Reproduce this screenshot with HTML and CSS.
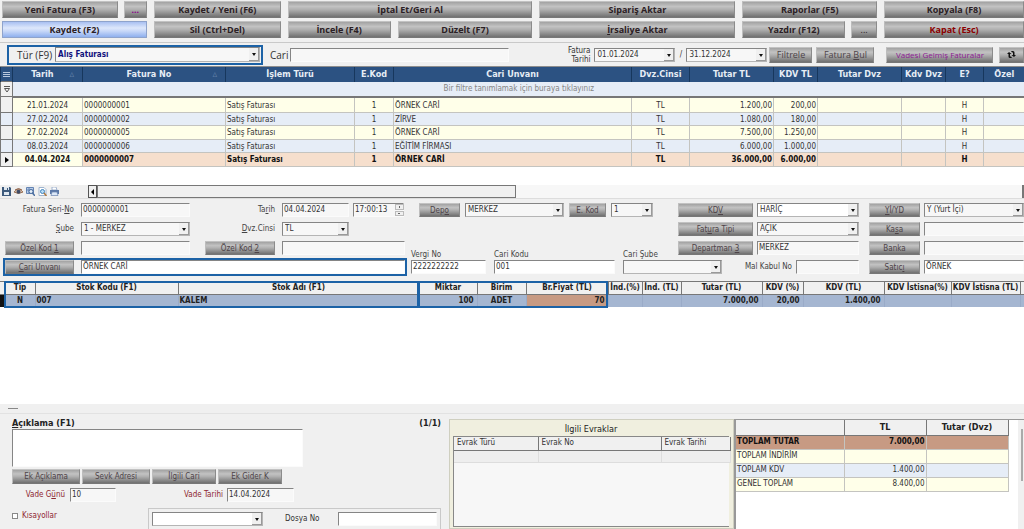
FILE: index.html
```html
<!DOCTYPE html>
<html lang="tr">
<head>
<meta charset="utf-8">
<title>Fatura</title>
<link rel="stylesheet" href="styles.css">
</head>
<body>
<header class="toolbar">
  <div class="tool-group">
    <div class="tool-row"><button class="btn tool">Yeni Fatura (F3)</button><button class="btn tool more purple">...</button></div>
    <div class="tool-row"><button class="btn tool primary">Kaydet (F2)</button></div>
  </div>
  <div class="tool-group">
    <div class="tool-row"><button class="btn tool">Kaydet / Yeni (F6)</button></div>
    <div class="tool-row"><button class="btn tool">Sil (Ctrl+Del)</button></div>
  </div>
  <div class="tool-group">
    <div class="tool-row"><button class="btn tool">İptal Et/Geri Al</button></div>
    <div class="tool-row wide-gap"><button class="btn tool narrow">İncele (F4)</button><button class="btn tool">Düzelt (F7)</button></div>
  </div>
  <div class="tool-group">
    <div class="tool-row"><button class="btn tool">Sipariş Aktar</button></div>
    <div class="tool-row"><button class="btn tool"><u>İ</u>rsaliye Aktar</button></div>
  </div>
  <div class="tool-group">
    <div class="tool-row"><button class="btn tool">Raporlar (F5)</button></div>
    <div class="tool-row"><button class="btn tool">Yazdır (F12)</button><button class="btn tool more thin">...</button></div>
  </div>
  <div class="tool-group">
    <div class="tool-row"><button class="btn tool">Kopyala (F8)</button></div>
    <div class="tool-row"><button class="btn tool danger">Kapat (Esc)</button></div>
  </div>
</header>

<section class="filters">
  <div class="type-box">
    <label class="big" for="tur">Tür (F9)</label>
    <span class="combo"><select id="tur" class="type-select"><option>Alış Faturası</option></select></span>
  </div>
  <label class="big cari-label" for="cari">Cari</label>
  <input id="cari" class="field cari-input" type="text">
  <label class="date-label" for="d1">Fatura<br>Tarihi</label>
  <span class="combo date"><select id="d1"><option>01.01.2024</option></select></span>
  <span class="slash">/</span>
  <span class="combo date"><select aria-label="Bitiş tarihi"><option>31.12.2024</option></select></span>
  <button class="btn mid">Filtrele</button>
  <button class="btn mid find">Fatura <u>B</u>ul</button>
  <button class="btn mid overdue">Vadesi Gelmiş Faturalar</button>
  <button class="btn mid refresh" aria-label="Yenile"><svg width="9" height="9" viewBox="0 0 18 18"><path d="M4 4L0 8h3v5q0 3 3 3h4l-2-3H6V8h3zM14 14l4-4h-3V5q0-3-3-3H8l2 3h2v5H9z" fill="#111"/></svg></button>
</section>

<section class="list">
  <table class="invoices">
    <colgroup><col class="w12"><col class="w70"><col class="w143"><col class="w129"><col class="w39"><col class="w238"><col class="w58"><col class="w84"><col class="w44"><col class="w84"><col class="w44"><col class="w38"><col class="w41"></colgroup>
    <thead>
      <tr><th><svg width="7" height="7" viewBox="0 0 7 7" stroke="#b9c9de"><path d="M0 1.500h7M0 3.500h7M0 5.500h7"/></svg></th><th><span class="sort">△</span>Tarih</th><th><span class="sort">△</span>Fatura No</th><th>İşlem Türü</th><th>E.Kod</th><th>Cari Unvanı</th><th>Dvz.Cinsi</th><th>Tutar TL</th><th>KDV TL</th><th>Tutar Dvz</th><th>Kdv Dvz</th><th>E?</th><th>Özel</th></tr>
      <tr class="filter-row"><td class="mark"><svg width="6" height="7" viewBox="0 0 6 7" fill="none" stroke="#555" stroke-width="1"><path d="M0 .5h6M.5 2.500h5L3 6z"/></svg></td><td colspan="12">Bir filtre tanımlamak için buraya tıklayınız</td></tr>
    </thead>
    <tbody>
      <tr><td class="mark"></td><td>21.01.2024</td><td class="l">0000000001</td><td class="l">Satış Faturası</td><td>1</td><td class="l">ÖRNEK CARİ</td><td>TL</td><td class="r">1.200,00</td><td class="r">200,00</td><td></td><td></td><td>H</td><td></td></tr>
      <tr><td class="mark"></td><td>27.02.2024</td><td class="l">0000000002</td><td class="l">Satış Faturası</td><td>1</td><td class="l">ZİRVE</td><td>TL</td><td class="r">1.080,00</td><td class="r">180,00</td><td></td><td></td><td>H</td><td></td></tr>
      <tr><td class="mark"></td><td>27.02.2024</td><td class="l">0000000005</td><td class="l">Satış Faturası</td><td>1</td><td class="l">ÖRNEK CARİ</td><td>TL</td><td class="r">7.500,00</td><td class="r">1.250,00</td><td></td><td></td><td>H</td><td></td></tr>
      <tr><td class="mark"></td><td>08.03.2024</td><td class="l">0000000006</td><td class="l">Satış Faturası</td><td>1</td><td class="l">EĞİTİM FİRMASI</td><td>TL</td><td class="r">6.000,00</td><td class="r">1.000,00</td><td></td><td></td><td>H</td><td></td></tr>
      <tr class="current"><td class="mark"><svg width="4" height="6" viewBox="0 0 4 6"><path d="M0 0l4 3-4 3z"/></svg></td><td>04.04.2024</td><td class="l">0000000007</td><td class="l">Satış Faturası</td><td>1</td><td class="l">ÖRNEK CARİ</td><td>TL</td><td class="r">36.000,00</td><td class="r">6.000,00</td><td></td><td></td><td>H</td><td></td></tr>
    </tbody>
  </table>
  <div class="list-foot">
    <div class="foot-icons">
      <svg width="9" height="9" viewBox="0 0 9 9"><path d="M0 0h8l1 1v8H0z" fill="#3d5a7c"/><path d="M2 0h5v3H2zM2 5h5v3H2z" fill="#dfe7ef"/><path d="M5 1h1v2H5z" fill="#3d5a7c"/></svg>
      <svg width="9" height="9" viewBox="0 0 9 9"><path d="M0 5Q4.500 0 9 5 4.500 8 0 5z" fill="#e7cdb8" stroke="#9a7258"/><circle cx="4.500" cy="4.700" r="2" fill="#3f4c66"/><path d="M1 3Q4.500 0 8 3" fill="none" stroke="#8a5a3d"/></svg>
      <svg width="9" height="9" viewBox="0 0 9 9"><path d="M.5.5h7v6h-7z" fill="#b8cdea" stroke="#6484b3"/><path d="M1 3h6M3 1v5" stroke="#6484b3"/><circle cx="5" cy="4.500" r="2" fill="#e6f0fb" stroke="#4c6f9f"/><path d="M6.500 6L9 9" stroke="#4c6f9f" stroke-width="1.500"/></svg>
      <svg width="9" height="9" viewBox="0 0 9 9"><path d="M1 .5h5l2 2v6H1z" fill="#fff" stroke="#9fb4ce"/><circle cx="4.500" cy="4.500" r="2" fill="#b7dcf5" stroke="#3f83bd"/><path d="M6 6l2.500 3" stroke="#b07738" stroke-width="1.400"/></svg>
      <svg width="9" height="9" viewBox="0 0 9 9"><path d="M2 0h4l1 3H2z" fill="#fff" stroke="#8098bd" stroke-width=".7"/><path d="M0 3h9v4H0z" fill="#5c79a8"/><path d="M2 5h5l1 3.500H1z" fill="#dce8f8" stroke="#6a84af" stroke-width=".7"/></svg>
    </div>
    <div class="scroll-left"><svg width="3" height="6" viewBox="0 0 3 6"><path d="M3 0L0 3l3 3z"/></svg></div>
    <div class="scroll-thumb"></div>
    <div class="scroll-track"></div>
  </div>
</section>

<section class="form">
  <div class="form-left">
    <label for="seri">Fatura Seri-<u>N</u>o</label>
    <input id="seri" class="field" type="text" value="0000000001">
    <label for="tarih">Ta<u>r</u>ih</label>
    <div class="pair"><input id="tarih" class="field w67" type="text" value="04.04.2024"><span class="spin"><input class="field" type="text" value="17:00:13" aria-label="Saat"><span class="spin-btns"><i></i><i></i></span></span></div>

    <label for="sube"><u>Ş</u>ube</label>
    <span class="combo"><select id="sube"><option>1 - MERKEZ</option></select></span>
    <label for="dvz"><u>D</u>vz.Cinsi</label>
    <span class="combo w67"><select id="dvz"><option>TL</option></select></span>

    <button class="btn small">Özel Kod <u>1</u></button>
    <input class="field" type="text" aria-label="Özel Kod 1">
    <button class="btn small kod2">Özel Kod <u>2</u></button>
    <input class="field" type="text" aria-label="Özel Kod 2">

    <div class="cari-row"><button class="btn small"><u>C</u>ari Unvanı</button><input class="field white" type="text" value="ÖRNEK CARİ" aria-label="Cari Unvanı"></div>
  </div>
  <div class="form-right">
    <div class="depo">
      <button class="btn small w41">Dep<u>o</u></button>
      <span class="combo w99"><select aria-label="Depo"><option>MERKEZ</option></select></span>
      <button class="btn small w37">E. Kod</button>
      <span class="combo w42"><select aria-label="E. Kod"><option>1</option></select></span>
    </div>
    <button class="btn small right-btn">KD<u>V</u></button>
    <span class="combo value-col white"><select aria-label="KDV"><option>HARİÇ</option></select></span>
    <button class="btn small last-btn"><u>Y</u>İ/YD</button>
    <span class="combo last"><select aria-label="Yİ/YD"><option>Y (Yurt İçi)</option></select></span>

    <button class="btn small right-btn">Fat<u>u</u>ra Tipi</button>
    <span class="combo value-col"><select aria-label="Fatura Tipi"><option>AÇIK</option></select></span>
    <button class="btn small last-btn">Ka<u>s</u>a</button>
    <input class="field last" type="text" aria-label="Kasa">

    <div class="account">
      <div class="stack w75"><label for="vergi">Vergi No</label><input id="vergi" class="field white" type="text" value="2222222222"></div>
      <div class="stack w121"><label for="kodu">Cari Kodu</label><input id="kodu" class="field white" type="text" value="001"></div>
      <div class="stack rest"><label for="csube">Cari Şube</label><span class="combo"><select id="csube"><option></option></select></span></div>
    </div>
    <button class="btn small right-btn dep">Departman <u>3</u></button>
    <input class="field value-col" type="text" value="MERKEZ" aria-label="Departman 3">
    <button class="btn small last-btn">Banka</button>
    <input class="field last" type="text" aria-label="Banka">

    <div class="mal"><label for="mal">Mal Kabul No</label><input id="mal" class="field" type="text"></div>
    <button class="btn small last-btn">Satıc<u>ı</u></button>
    <input class="field last white" type="text" value="ÖRNEK" aria-label="Satıcı">
  </div>
</section>

<section class="lines">
  <table class="items">
    <colgroup><col class="w5"><col class="w30"><col class="w143"><col class="w241"><col class="w58"><col class="w49"><col class="w82"><col class="w34"><col class="w39"><col class="w81"><col class="w41"><col class="w81"><col class="w67"><col class="w69"><col class="w4"></colgroup>
    <thead><tr><th></th><th>Tip</th><th>Stok Kodu (F1)</th><th>Stok Adı (F1)</th><th>Miktar</th><th>Birim</th><th>Br.Fiyat (TL)</th><th>İnd.(%)</th><th>İnd. (TL)</th><th>Tutar (TL)</th><th>KDV (%)</th><th>KDV (TL)</th><th>KDV İstisna(%)</th><th>KDV İstisna (TL)</th><th></th></tr></thead>
    <tbody><tr><td class="dot"></td><td>N</td><td class="l">007</td><td class="l">KALEM</td><td class="r">100</td><td>ADET</td><td class="r hot">70</td><td></td><td></td><td class="r">7.000,00</td><td class="r">20,00</td><td class="r">1.400,00</td><td></td><td></td><td></td></tr></tbody>
  </table>
  <div class="marks"><div class="mark-a"></div><div class="mark-b"></div></div>
</section>

<div class="splitter"><span></span></div>

<footer class="bottom">
  <div class="notes">
    <div class="notes-head"><label for="aciklama"><u>A</u>çıklama (F1)</label><span>(1/1)</span></div>
    <textarea id="aciklama" class="field white memo"></textarea>
    <div class="note-btns"><button class="btn small">Ek Açıklama</button><button class="btn small">Sevk Adresi</button><button class="btn small">İlgili Cari</button><button class="btn small">Ek Gider K</button></div>
    <div class="due"><label for="gun">Vade G<u>ü</u>nü</label><input id="gun" class="field w46" type="text" value="10"><label class="due-date" for="vt">Vade Tarihi</label><input id="vt" class="field w67" type="text" value="14.04.2024"></div>
    <div class="last-line">
      <label class="check"><input type="checkbox">Kısayollar</label>
      <div class="dosya"><span class="combo white"><select aria-label="Dosya türü"><option></option></select></span><label for="dosya">Dosya No</label><input id="dosya" class="field white" type="text"></div>
    </div>
  </div>
  <div class="docs">
    <h2>İlgili Evraklar</h2>
    <div class="docs-body">
      <table><colgroup><col class="w84"><col class="w123"><col class="w69"></colgroup><thead><tr><th>Evrak Türü</th><th>Evrak No</th><th>Evrak Tarihi</th></tr></thead><tbody><tr><td></td><td></td><td></td></tr></tbody></table>
    </div>
  </div>
  <div class="totals">
    <table><colgroup><col class="w108"><col class="w82"><col class="w82"></colgroup>
      <thead><tr><th></th><th>TL</th><th>Tutar (Dvz)</th></tr></thead>
      <tbody>
        <tr class="sum"><td>TOPLAM TUTAR</td><td class="r">7.000,00</td><td></td></tr>
        <tr><td>TOPLAM İNDİRİM</td><td></td><td></td></tr>
        <tr><td>TOPLAM KDV</td><td class="r">1.400,00</td><td></td></tr>
        <tr><td>GENEL TOPLAM</td><td class="r">8.400,00</td><td></td></tr>
      </tbody>
    </table>
    <div class="vscroll"><span></span></div>
  </div>
</footer>
</body>
</html>
```

FILE: styles.css
```css
* { box-sizing: border-box; }
body {
  margin: 0;
  min-height: 100vh;
  display: flex;
  flex-direction: column;
  overflow: hidden;
  background: #f0f0f0;
  color: #333;
  font: 8px/10px "DejaVu Sans Condensed", "DejaVu Sans", sans-serif;
}
button, input, select, textarea { font: inherit; color: inherit; margin: 0; min-width: 0; }
label { white-space: nowrap; }
table { border-collapse: collapse; table-layout: fixed; width: 100%; }
th, td { padding: 0 2px; white-space: nowrap; overflow: hidden; text-align: center; }
td.l { text-align: left; padding-left: 1px; }
td.r { text-align: right; padding-right: 1px; }

/* column and field widths */
.w4 { width: 4px; } .w5 { width: 5px; } .w12 { width: 12px; } .w30 { width: 30px; } .w34 { width: 34px; }
.w37 { width: 37px; } .w38 { width: 38px; } .w39 { width: 39px; } .w41 { width: 41px; } .w42 { width: 42px; }
.w44 { width: 44px; } .w46 { width: 46px; } .w49 { width: 49px; } .w58 { width: 58px; } .w67 { width: 67px; }
.w69 { width: 69px; } .w70 { width: 70px; } .w75 { width: 75px; } .w81 { width: 81px; }
.w82 { width: 82px; } .w84 { width: 84px; } .w99 { width: 99px; } .w108 { width: 108px; } .w121 { width: 121px; }
.w123 { width: 123px; } .w129 { width: 129px; } .w143 { width: 143px; } .w238 { width: 238px; } .w241 { width: 241px; }

/* buttons */
.btn {
  padding: 0 2px;
  border: 1px solid;
  border-color: #c2c2c2 #8b8b8b #777 #bdbdbd;
  border-radius: 0;
  background: linear-gradient(#a2a2a2, #c2c2c2 30%, #b0b0b0 50%, #707070);
  white-space: nowrap;
  text-align: center;
}
.tool {
  flex: 1;
  height: 17px;
  color: #2b2024;
  font: bold 9px/13px "Open Sans", "Noto Sans", sans-serif;
}
.more { flex: none; width: 23px; }
.thin { width: 26px; font-weight: normal; }
.purple { color: #8b008b; }
.danger { color: #8b0000; }
.primary { border-color: #8ea3cc; background: linear-gradient(#a9c0f2, #dde7fb 40%, #c8d8f8 60%, #8fb0ee); }
.small { height: 14px; color: #4d4348; line-height: 11px; }
.mid { height: 16px; color: #4d4348; font: 9px/12px "Open Sans", "Noto Sans", sans-serif; }

/* fields */
.field, .combo {
  height: 14px;
  border: 1px solid;
  border-color: #858585 #fbfbfb #fbfbfb #858585;
  border-radius: 0;
  background: #f7f7f7;
}
.field { width: 100%; padding: 0 1px; line-height: 14px; }
.field.w46 { width: 46px; }
.field.w67 { width: 67px; }
.field.white, .combo.white { background: #fff; }
.combo { position: relative; display: flex; border-color: #858585 #b5b5b5 #b5b5b5 #858585; }
.combo select { flex: 1; width: 100%; padding: 0 10px 0 2px; border: 0; border-radius: 0; background: none; appearance: none; line-height: 12px; }
.combo::before {
  content: "";
  position: absolute;
  inset: 0 0 0 auto;
  width: 9px;
  background: #f0f0f0;
  border-right: 1px solid #999;
  border-bottom: 1px solid #999;
}
.combo::after {
  content: "";
  position: absolute;
  top: 5px;
  right: 3px;
  border: 2px solid transparent;
  border-top: 3px solid #111;
  border-bottom: 0;
}

/* toolbar */
.toolbar {
  display: grid;
  grid-template-columns: 145fr 127fr 245fr 196fr 135fr 140fr;
  column-gap: 7px;
  padding: 1px 0 4px 2px;
  border-bottom: 1px solid #c9c9c9;
}
.tool-group { display: flex; flex-direction: column; gap: 3px; min-width: 0; }
.tool-row { display: flex; gap: 6px; }
.wide-gap { gap: 7px; }
.narrow { flex: 0 0 42%; }

/* filters */
.filters { display: flex; align-items: center; height: 23px; }
.big { color: #333; font: 10px/14px "Open Sans", "Noto Sans", sans-serif; }
.type-box { display: flex; align-items: center; gap: 3px; width: 256px; height: 20px; margin-left: 7px; padding: 0 1px 0 8px; border: 2px solid #1c62a6; }
.type-box .combo { flex: 1; height: 15px; }
.type-select { color: #10107c; font-weight: bold; }
.cari-label { margin: 0 2px 0 7px; }
.cari-input { width: 219px; }
.date-label { width: 81px; margin-right: 4px; line-height: 9px; text-align: right; }
.date { width: 81px; }
.slash { width: 11px; text-align: center; }
.filters .mid { margin-left: 2px; width: 43px; }
.filters .find { margin-left: 4px; width: 58px; }
.filters .overdue { margin-left: 12px; width: 107px; color: #8e1a94; font-size: 8px; }
.filters .refresh { flex: 1; margin-left: 6px; padding: 0; }
.refresh svg { display: block; margin: auto; }

/* invoice list */
.list { background: #fff; }
.invoices thead th { height: 15px; border-left: 1px solid #17375d; background: #2c5282; color: #e6edf5; font-weight: bold; font-size: 9px; border-top: 1px solid #8d8d8d; }
.invoices thead th svg { display: block; margin: auto; }
.sort { float: right; margin-right: 6px; font-size: 6px; color: #8fa7c4; }
.filter-row td { height: 15px; background: #e6edf7; color: #858585; }
.filter-row td + td { border-left: 1px solid #666; border-bottom: 2px solid #777; }
.invoices tbody td { height: 14px; border: 1px solid #c4c4c0; border-top: 0; background: #ffffe9; line-height: 9px; }
.invoices tbody tr:nth-child(even) td { height: 13px; background: #e6edf7; }
.invoices tbody tr:first-child td { height: 16px; padding-top: 2px; }
.invoices tbody .current td { background: #f6dfcd; color: #111; font-weight: bold; }
.invoices tbody .current td:nth-child(2) { background: #ffffe9; }
.invoices tr td.mark, .invoices tbody tr.current td.mark { background: #f0f0f0; border: 1px solid #777; }
.mark svg { display: block; margin: auto; }
.list-foot { display: flex; height: 14px; margin-top: 18px; border-bottom: 1px solid #ddd; background: #f7f7f7; }
.foot-icons { display: flex; align-items: center; gap: 3px; width: 88px; padding-left: 2px; background: #f0f0f0; }
.scroll-left { display: grid; place-items: center; width: 9px; border: 1px solid #555; background: #f0f0f0; }
.scroll-thumb { width: 419px; border: 1px solid #777; background: #f0f0f0; }
.scroll-track { flex: 1; border-right: 2px solid #777; }

/* invoice form */
.form { display: flex; padding: 4px 0 7px 5px; }
.form label { color: #444; }
.form-left { display: grid; grid-template-columns: 69px 109px 78px 123px; grid-auto-rows: 14px; gap: 5px 7px; align-items: center; width: 400px; }
.form-left > label { text-align: right; }
.kod2 { margin-left: 8px; }
.pair { display: flex; gap: 4px; }
.spin { position: relative; width: 51px; }
.spin-btns { position: absolute; inset: 1px 0 1px auto; width: 9px; display: flex; flex-direction: column; gap: 1px; }
.spin-btns i { flex: 1; border: 1px solid #bbb; background: radial-gradient(#666 1px, #f0f0f0 1px); }
.cari-row { grid-column: 1 / -1; display: flex; gap: 7px; outline: 2px solid #1c62a6; }
.cari-row .btn { flex: none; width: 69px; }
.form-right { flex: 1; display: grid; grid-template-columns: 263px 44px 27px 102px 57px 1fr; grid-template-rows: repeat(4, 14px); gap: 5px 4px; min-width: 0; margin-left: 6px; }
.depo { grid-area: 1 / 1; display: flex; gap: 5px; padding-left: 8px; }
.right-btn { grid-column: 2 / 4; }
.value-col { grid-column: 4; }
.last-btn { grid-column: 5; margin-left: 6px; }
.last { grid-column: 6; }
.account { grid-area: 3 / 1 / 5 / 3; display: flex; align-items: flex-end; gap: 8px; }
.stack { display: flex; flex-direction: column; }
.rest { flex: 1; }
.dep { grid-row: 3; }
.mal { grid-area: 4 / 3 / 5 / 5; display: flex; justify-content: flex-end; align-items: center; gap: 4px; }
.mal .field { width: 63px; }

/* invoice lines */
.lines { position: relative; flex: 1; background: #fff; }
.items { font-weight: bold; color: #222; }
.items th { height: 13px; padding: 0; border: 1px solid #777; border-left: 0; background: #f0f0f0; }
.items td { height: 12px; background: #a5b6d1; border-right: 1px solid #9aabc8; }
.items td.r { padding-right: 3px; }
.items td.hot { background: #c79a83; }
.items td.dot { background: #111; }
.marks { position: absolute; inset: 0 auto auto 4px; display: flex; height: 27px; }
.mark-a, .mark-b { border: 2px solid #1c62a6; }
.mark-a { width: 415px; }
.mark-b { width: 190px; margin-left: -1px; }
.splitter { height: 10px; padding: 4px 8px; border-bottom: 1px solid #e2e2e2; }
.splitter span { display: block; width: 10px; height: 1px; background: #888; }

/* bottom panels */
.bottom { display: flex; height: 115px; padding-top: 5px; }
.notes { display: flex; flex-direction: column; width: 449px; padding-left: 12px; }
.notes-head { display: flex; justify-content: space-between; height: 10px; line-height: 8px; padding-right: 8px; font-weight: bold; font-size: 9px; color: #222; }
.memo { width: 291px; height: 38px; resize: none; }
.note-btns { display: flex; gap: 2px; margin-top: 2px; }
.note-btns .btn { width: 68px; height: 15px; }
.note-btns .btn:nth-child(n+3) { width: 64px; }
.due { display: flex; align-items: center; margin: 4px 0 6px; color: #8e2630; }
.due label { width: 53px; margin-right: 5px; text-align: right; }
.due .due-date { width: 107px; margin-right: 4px; }
.due .field { color: #333; }
.last-line { display: flex; flex: 1; justify-content: space-between; padding-right: 8px; color: #8e2630; }
.check { display: flex; align-items: center; gap: 4px; height: 16px; }
.check input { width: 6px; height: 6px; appearance: none; border: 1px solid #888; background: #fff; }
.dosya { display: flex; align-items: center; width: 293px; padding: 0 3px; border: 1px solid #c9c9c9; border-bottom: 0; color: #333; }
.dosya .combo { width: 111px; }
.dosya label { margin-left: 22px; }
.dosya .field { width: 99px; margin-left: auto; }
.docs { display: flex; flex-direction: column; width: 285px; padding: 0 4px 1px 3px; border: 1px solid #cfcfc0; background: #f0efdf; }
.docs h2 { margin: 0; padding-top: 3px; height: 16px; font-size: 9px; font-weight: normal; line-height: 12px; text-align: center; color: #222; }
.docs-body { flex: 1; border: 1px solid #888; border-right: 0; background: #f7f7f7; }
.docs th { height: 13px; padding-left: 3px; border-right: 1px solid #777; border-bottom: 1px solid #777; background: #f0f0f0; font-weight: normal; text-align: left; }
.docs td { height: 12px; background: #eee; border: 1px solid #ddd; border-left: 0; }
.totals { flex: 1; display: flex; justify-content: space-between; align-items: flex-start; border-left: 2px solid #999; border-top: 1px solid #999; background: #fff; }
.totals table { width: 272px; }
.totals th { height: 15px; background: #f0f0f0; border-right: 1px solid #777; border-bottom: 1px solid #777; font-size: 9px; color: #222; }
.totals td { height: 14px; background: #ffffe9; border-right: 1px solid #c4c4c0; border-bottom: 1px solid #c4c4c0; text-align: left; padding-left: 1px; }
.totals td.r { text-align: right; }
.totals tr:nth-child(3) td { background: #e6edf7; }
.totals .sum td { background: #c79a83; color: #111; font-weight: bold; }
.vscroll { align-self: stretch; width: 6px; padding: 9px 1px 0 3px; background: #f0f0f0; }
.vscroll span { display: block; height: 52px; background: #aaa; }
```
